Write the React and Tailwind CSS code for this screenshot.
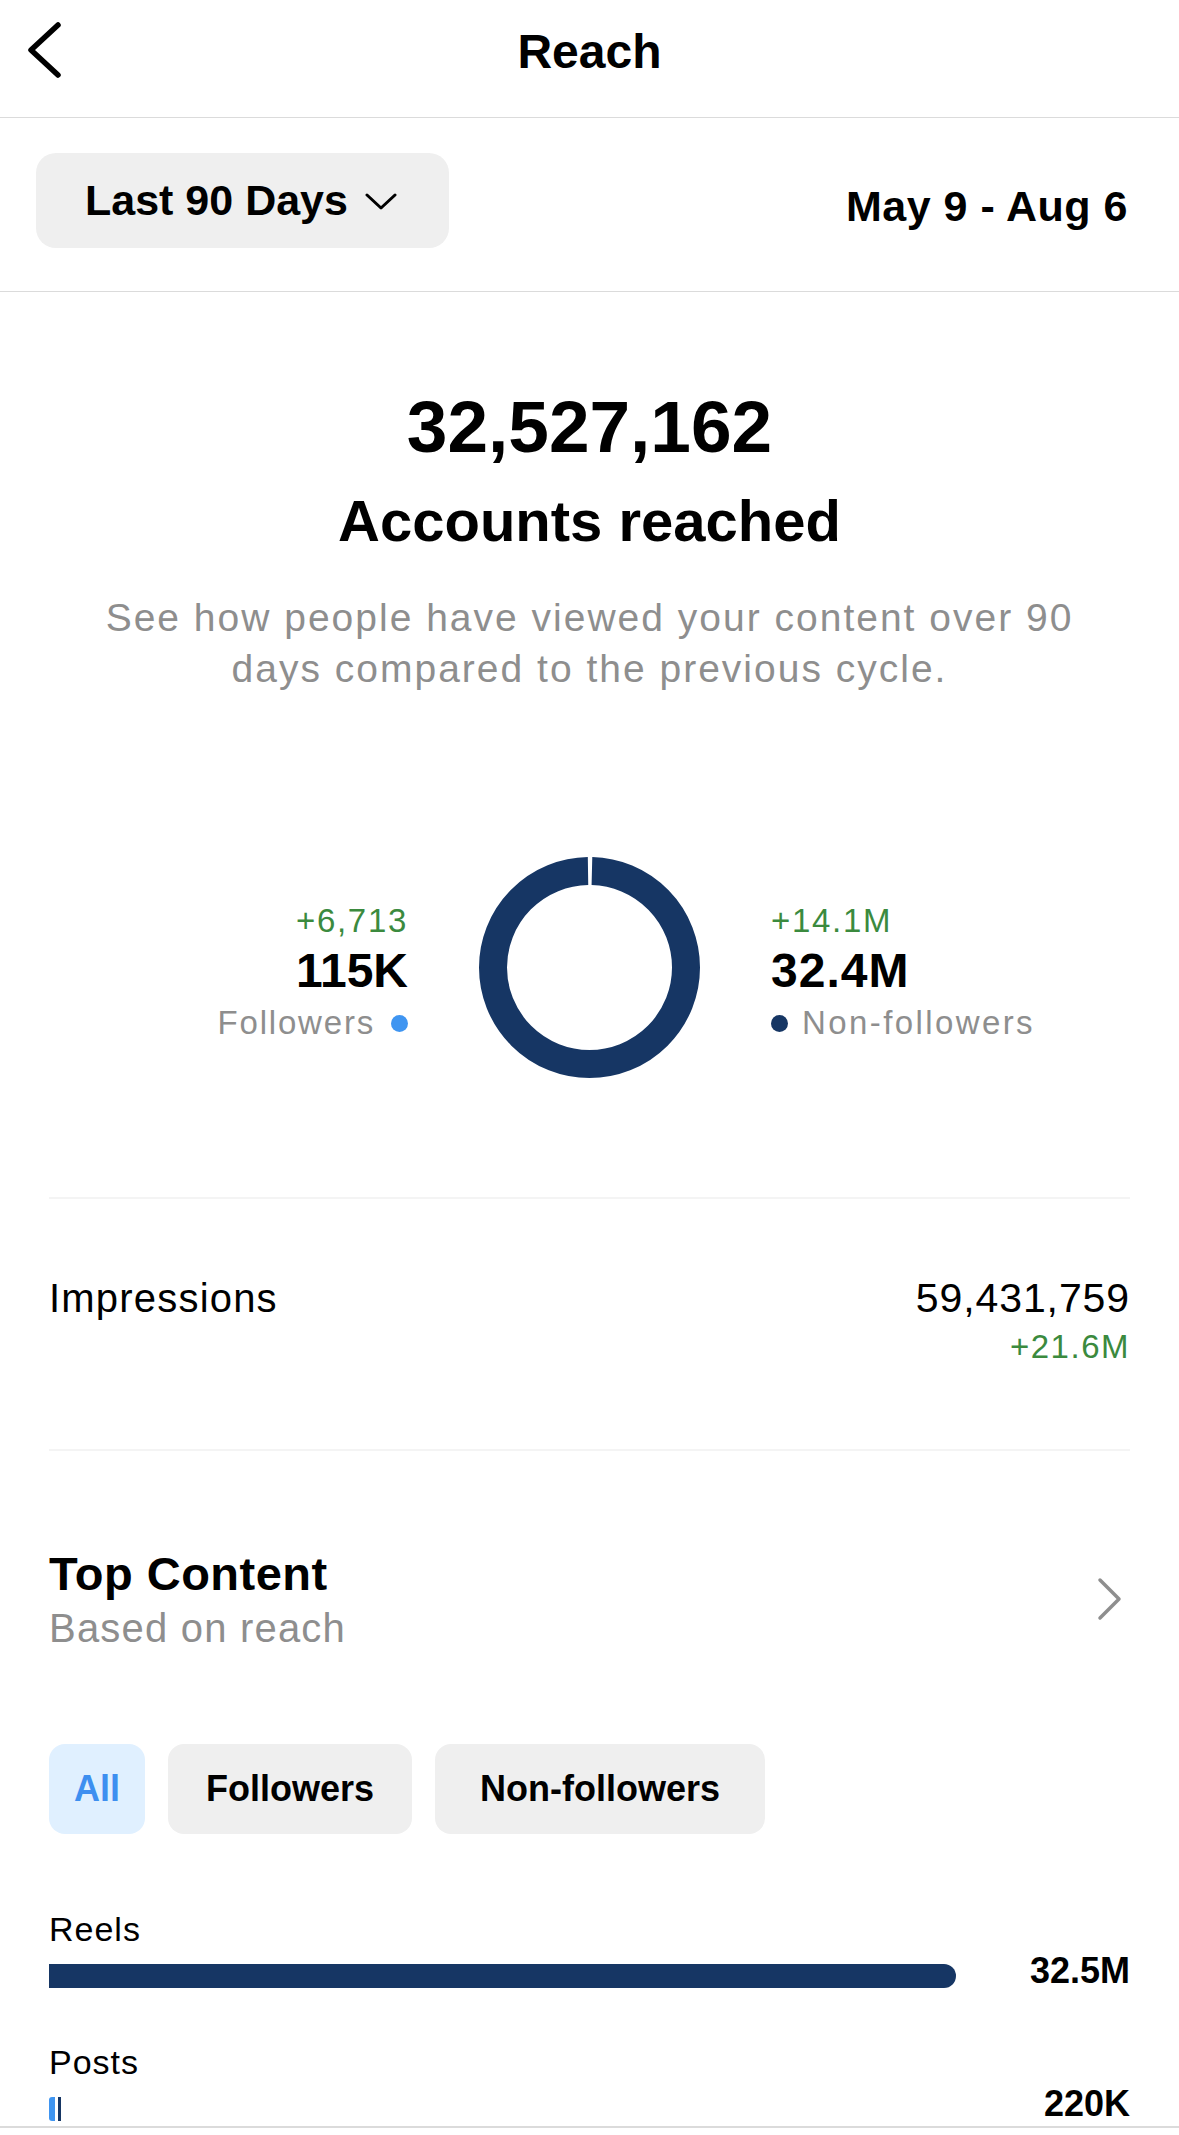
const FONT = { fontFamily: '"Liberation Sans", Arial, sans-serif' };

function Donut() {
  // ring: outer 221, thickness 28, tiny gap at the top
  const r = 96.5;
  const c = 2 * Math.PI * r;
  const gap = 5;
  return (
    <svg width="221" height="221" viewBox="0 0 221 221">
      <circle
        cx="110.5"
        cy="110.5"
        r={r}
        fill="none"
        stroke="#163664"
        strokeWidth="28"
        strokeDasharray={`${c - gap} ${gap}`}
        strokeDashoffset={-gap / 2}
        transform="rotate(-90 110.5 110.5)"
      />
    </svg>
  );
}

function Bar({ label, value, children }) {
  return (
    <div>
      <div className="text-[34px] leading-none tracking-[1px] text-black">{label}</div>
      <div className="flex items-end mt-[7px]">
        <div className="w-[907px] h-[24px] flex mb-[1px]">{children}</div>
        <div className="flex-1 text-right text-[36px] leading-none font-bold">{value}</div>
      </div>
    </div>
  );
}

export default function App() {
  return (
    <div className="w-[1179px] h-[2135px] bg-white overflow-hidden text-black" style={FONT}>
      {/* header */}
      <div className="h-[118px] border-b border-[#dbdbdb] flex items-center relative">
        <svg className="absolute left-[24px] top-[20px]" width="40" height="60" viewBox="0 0 40 60">
          <path d="M34 5 L7 30 L34 55" fill="none" stroke="#000" strokeWidth="5.5" strokeLinecap="round" strokeLinejoin="round" />
        </svg>
        <div className="w-full text-center text-[48px] font-bold leading-none mt-[-14px]">Reach</div>
      </div>

      {/* filter row */}
      <div className="h-[174px] border-b border-[#dbdbdb] px-[36px] flex items-start justify-between">
        <div className="mt-[35px] h-[95px] w-[413px] rounded-[20px] bg-[#efefef] flex items-center pl-[49px]">
          <span className="text-[43px] font-bold leading-none">Last 90 Days</span>
          <svg className="ml-[17px] mt-[2px]" width="32" height="18" viewBox="0 0 32 18">
            <path d="M2 2 L16 15 L30 2" fill="none" stroke="#000" strokeWidth="3" strokeLinecap="round" strokeLinejoin="round" />
          </svg>
        </div>
        <div className="mt-[67px] pr-[15px] text-[43px] font-bold leading-none tracking-[0.5px]">May 9 - Aug 6</div>
      </div>

      {/* summary */}
      <div className="flex flex-col items-center text-center">
        <div className="mt-[98px] text-[73px] font-bold leading-none">32,527,162</div>
        <div className="mt-[29px] text-[58px] font-bold leading-none">Accounts reached</div>
        <div className="mt-[42px] text-[39px] leading-[51px] tracking-[2px] text-[#8e8e8e]">
          See how people have viewed your content over 90
          <br />
          days compared to the previous cycle.
        </div>
      </div>

      {/* donut */}
      <div className="mt-[163px] grid grid-cols-[1fr_auto_1fr] items-center gap-x-[71px]">
        <div className="flex flex-col items-end pt-[9px]">
          <div className="text-[33px] leading-[40px] tracking-[1.7px] text-[#3b8a3e]">+6,713</div>
          <div className="mt-[4px] text-[48px] leading-[52px] font-bold">115K</div>
          <div className="mt-[6px] text-[33px] leading-[40px] tracking-[1.8px] text-[#8e8e8e] flex items-center">
            Followers
            <span className="ml-[16px] w-[17px] h-[17px] rounded-full bg-[#3f95f1]" />
          </div>
        </div>
        <Donut />
        <div className="flex flex-col items-start pt-[9px]">
          <div className="text-[33px] leading-[40px] tracking-[1.7px] text-[#3b8a3e]">+14.1M</div>
          <div className="mt-[4px] text-[48px] leading-[52px] font-bold tracking-[1px]">32.4M</div>
          <div className="mt-[6px] text-[33px] leading-[40px] tracking-[2.4px] text-[#8e8e8e] flex items-center">
            <span className="mr-[14px] w-[17px] h-[17px] rounded-full bg-[#163664]" />
            Non-followers
          </div>
        </div>
      </div>

      <div className="px-[49px]">
        <div className="mt-[119px] h-[2px] bg-[#f4f4f4]" />

        {/* impressions */}
        <div className="mt-[79px] flex justify-between items-start">
          <div className="text-[40px] leading-none tracking-[1.2px]">Impressions</div>
          <div className="flex flex-col items-end">
            <div className="text-[41px] leading-none tracking-[0.9px]">59,431,759</div>
            <div className="mt-[11px] text-[33px] leading-none tracking-[1.5px] text-[#3b8a3e]">+21.6M</div>
          </div>
        </div>

        <div className="mt-[86px] h-[2px] bg-[#f4f4f4]" />

        {/* top content */}
        <div className="mt-[99px] flex items-center justify-between">
          <div>
            <div className="text-[47px] font-bold leading-none tracking-[0.5px]">Top Content</div>
            <div className="mt-[11px] text-[40px] leading-none tracking-[1.2px] text-[#8e8e8e]">Based on reach</div>
          </div>
          <svg className="mr-[6px]" width="28" height="44" viewBox="0 0 28 44">
            <path d="M4 3 L23 22 L4 41" fill="none" stroke="#8e8e8e" strokeWidth="3.5" strokeLinecap="round" strokeLinejoin="round" />
          </svg>
        </div>

        {/* pills */}
        <div className="mt-[96px] flex gap-[23px]">
          <div className="h-[90px] px-[25px] rounded-[16px] bg-[#e0f0ff] text-[#3d8ff0] text-[36px] font-bold flex items-center">All</div>
          <div className="h-[90px] px-[38px] rounded-[16px] bg-[#efefef] text-[36px] font-bold flex items-center">Followers</div>
          <div className="h-[90px] px-[45px] rounded-[16px] bg-[#efefef] text-[36px] font-bold flex items-center">Non-followers</div>
        </div>

        {/* bars */}
        <div className="mt-[78px]">
          <Bar label="Reels" value="32.5M">
            <div className="w-full h-full bg-[#163664] rounded-r-full" />
          </Bar>
        </div>
        <div className="mt-[56px]">
          <Bar label="Posts" value="220K">
            <div className="w-[6px] h-full bg-[#3f95f1] rounded-l-[3px]" />
            <div className="ml-[3px] w-[3px] h-full bg-[#163664]" />
          </Bar>
        </div>
      </div>

      <div className="mt-[4px] border-t-2 border-[#dbdbdb]" />
    </div>
  );
}
